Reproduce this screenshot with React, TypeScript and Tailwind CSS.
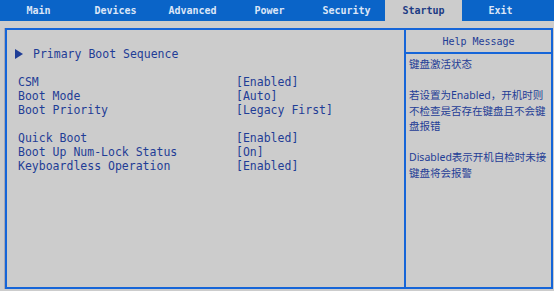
import { SVGProps } from 'react';

const tabs = ['Main', 'Devices', 'Advanced', 'Power', 'Security', 'Startup', 'Exit'];

const groupA = [
  ['CSM', '[Enabled]'],
  ['Boot Mode', '[Auto]'],
  ['Boot Priority', '[Legacy First]'],
];

const groupB = [
  ['Quick Boot', '[Enabled]'],
  ['Boot Up Num-Lock Status', '[On]'],
  ['Keyboardless Operation', '[Enabled]'],
];

export default function App() {
  return (
    <div className="w-[554px] h-[291px] bg-[#cccccc] flex flex-col overflow-hidden font-['DejaVu_Sans_Mono',monospace]">
      {/* Tab bar */}
      <div className="h-[21px] bg-[#0a64c8] flex">
        {tabs.map((tab) => (
          <div
            key={tab}
            className={
              tab === 'Startup'
                ? 'w-[77px] flex items-center justify-center bg-[#cccccc] text-[#1d3b84] text-[10px] font-bold'
                : 'w-[77px] flex items-center justify-center text-[#dce6f7] text-[10px] font-bold'
            }
          >
            {tab}
          </div>
        ))}
      </div>

      {/* Main frame */}
      <div className="ml-[4px] mr-[1px] mt-[7px] mb-[2px] flex-1 flex border-l border-[#a9a9b4]">
        <div className="flex-1 flex border-2 border-l-2 border-[#1565d8]">
          {/* Settings list */}
          <div className="flex-1 pt-[17px] text-[11.5px] leading-[14px] text-[#1f3d96]">
            <div className="flex items-center pl-[8px]">
              <TriangleIcon className="w-[8px] h-[10px] mr-[10px]" />
              <span>Primary Boot Sequence</span>
            </div>
            <div className="h-[14px]" />
            {groupA.map(([label, value]) => (
              <div key={label} className="flex pl-[11px]">
                <span className="w-[218px]">{label}</span>
                <span>{value}</span>
              </div>
            ))}
            <div className="h-[14px]" />
            {groupB.map(([label, value]) => (
              <div key={label} className="flex pl-[11px]">
                <span className="w-[218px]">{label}</span>
                <span>{value}</span>
              </div>
            ))}
          </div>

          {/* Help panel */}
          <div className="w-[147px] border-l-2 border-[#1565d8] flex flex-col">
            <div className="h-[24px] border-b-2 border-[#1565d8] flex items-center justify-center text-[10px] text-[#1f3d96]">
              Help Message
            </div>
            <div className="pl-[3px] pt-[3px] text-[10.5px] leading-[15.5px] text-[#1f3d96] font-['Noto_Sans','Noto_Sans_CJK_SC',sans-serif] whitespace-nowrap">
              <div>键盘激活状态</div>
              <div className="h-[15.5px]" />
              <div>若设置为Enabled，开机时则</div>
              <div>不检查是否存在键盘且不会键</div>
              <div>盘报错</div>
              <div className="h-[15.5px]" />
              <div>Disabled表示开机自检时未接</div>
              <div>键盘将会报警</div>
            </div>
          </div>
        </div>
      </div>
    </div>
  );
}

function TriangleIcon(props: SVGProps<SVGSVGElement>) {
  return (
    <svg {...props} viewBox="0 0 8 10" xmlns="http://www.w3.org/2000/svg">
      <path d="M0 0 L8 5 L0 10 Z" fill="#1f3d96" />
    </svg>
  );
}
